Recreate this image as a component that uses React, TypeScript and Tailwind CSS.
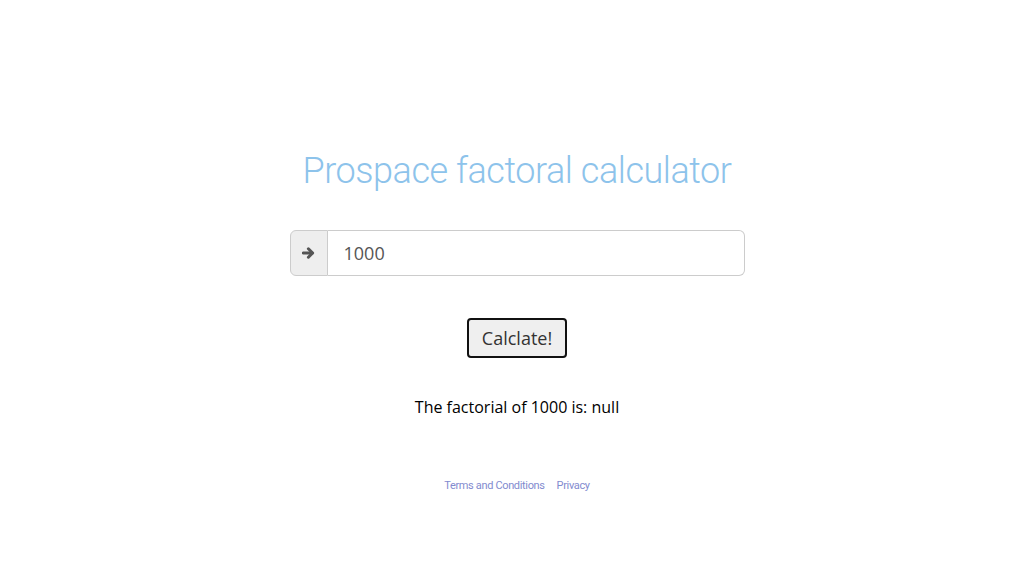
export default function App() {
  return (
    <div className="min-h-[576px] bg-white flex flex-col items-center pt-[149px]" style={{ fontFamily: "'Open Sans', sans-serif" }}>
      <h1
        className="text-[36px] leading-[44px] font-light text-[#8dc3eb] tracking-[-0.45px]"
        style={{ fontFamily: "Roboto, sans-serif" }}
      >
        Prospace factoral calculator
      </h1>
      <div className="mt-[37px] flex w-[455px] h-[46px]">
        <div className="w-[38px] flex items-center justify-center bg-[#eeeeee] border border-[#cccccc] rounded-l-[6px]">
          <svg width="13" height="12" viewBox="0 0 13 12" aria-hidden="true">
            <path d="M1.2 6h9" stroke="#555" strokeWidth="3" strokeLinecap="round" />
            <path d="M6.4 1.8 10.6 6 6.4 10.2" fill="none" stroke="#555" strokeWidth="3" strokeLinecap="round" strokeLinejoin="round" />
          </svg>
        </div>
        <div className="flex-1 flex items-center border border-l-0 border-[#cccccc] rounded-r-[6px] px-4 text-[18px] text-[#555555]">
          1000
        </div>
      </div>
      <button className="mt-[42px] w-[100px] h-[40px] border-2 border-[#111111] rounded-[4px] bg-[#efefef] text-[18px] text-[#333333]">
        Calclate!
      </button>
      <p className="mt-[37px] text-[16px] leading-[24px] text-black">The factorial of 1000 is: null</p>
      <div className="mt-[59px] flex gap-[12px] text-[11px] leading-[16px] text-[#828bcf] tracking-[-0.35px]" style={{ fontFamily: "Roboto, sans-serif" }}>
        <span>Terms and Conditions</span>
        <span>Privacy</span>
      </div>
    </div>
  );
}
